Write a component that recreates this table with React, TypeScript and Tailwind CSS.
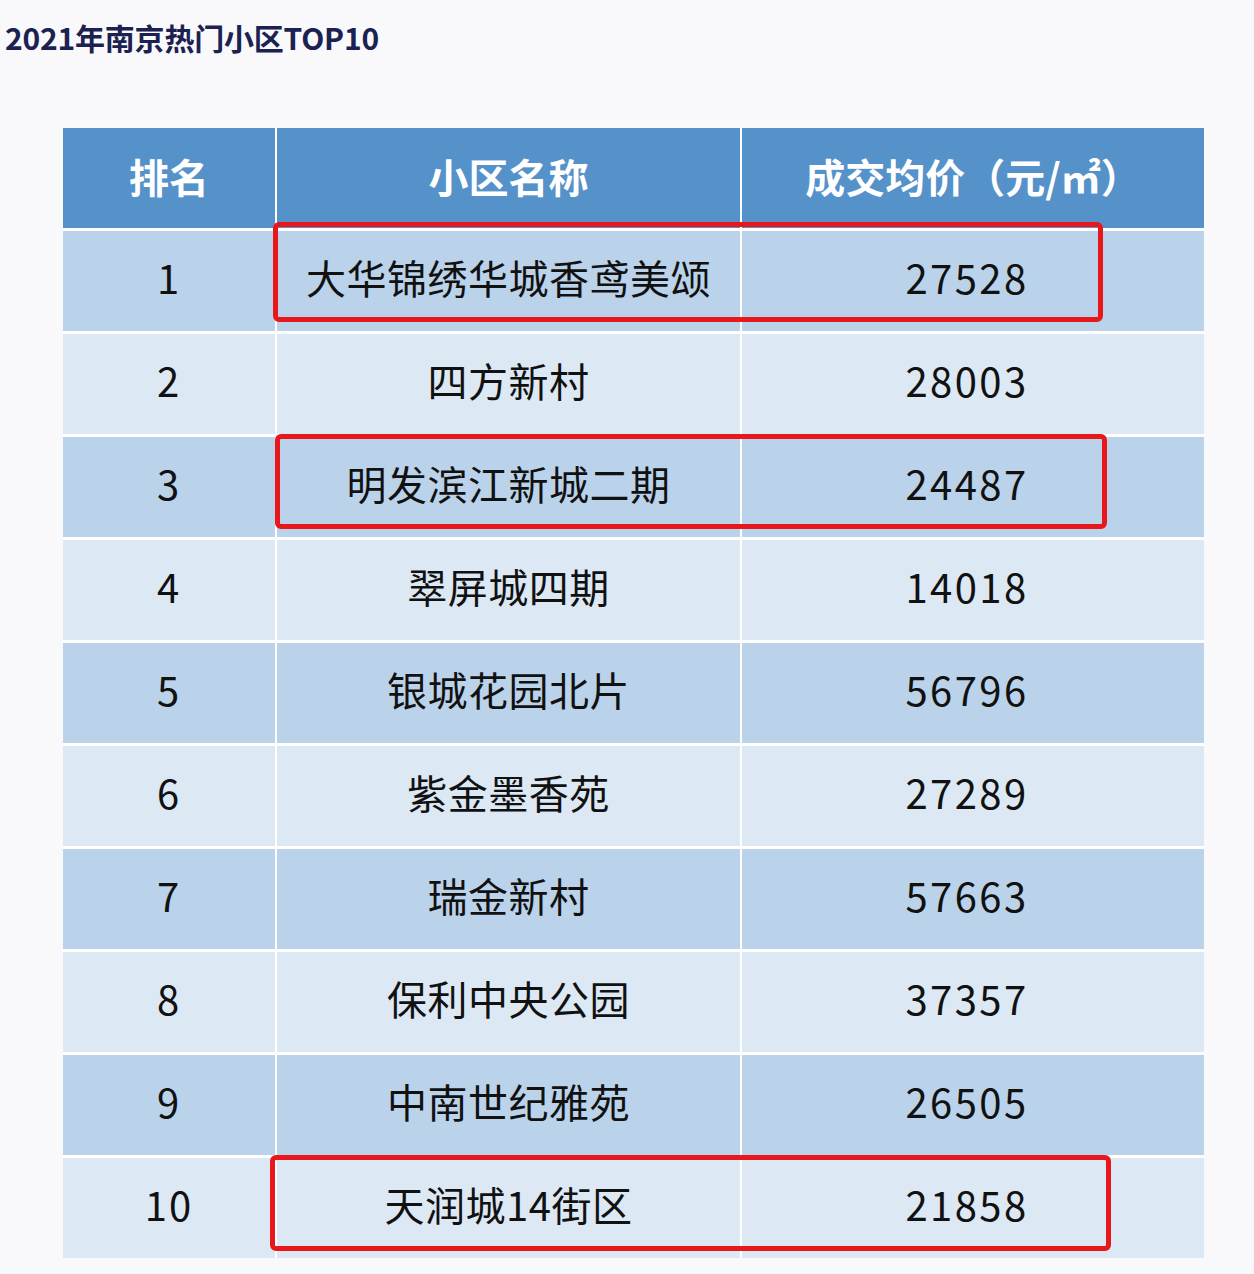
const rows: [string, string, string][] = [
  ["1", "大华锦绣华城香鸢美颂", "27528"],
  ["2", "四方新村", "28003"],
  ["3", "明发滨江新城二期", "24487"],
  ["4", "翠屏城四期", "14018"],
  ["5", "银城花园北片", "56796"],
  ["6", "紫金墨香苑", "27289"],
  ["7", "瑞金新村", "57663"],
  ["8", "保利中央公园", "37357"],
  ["9", "中南世纪雅苑", "26505"],
  ["10", "天润城14街区", "21858"],
];

const font = "font-['Noto_Sans_CJK_SC','Noto_Sans',sans-serif]";

export default function App() {
  return (
    <div className={`min-h-[1274px] w-[1254px] bg-[#f9f9fb] ${font}`}>
      <h1 className="pl-[5px] pt-[18px] text-[30px] font-bold leading-[38px] tracking-[-0.2px] text-[#1b2150]">
        2021年南京热门小区TOP10
      </h1>

      <div className="relative ml-[63px] mt-[72px] w-[1141px]">
        <div className="grid grid-cols-[212px_463px_462px] gap-x-[2px] gap-y-[3px] bg-white">
          {["排名", "小区名称", "成交均价（元/㎡）"].map((h) => (
            <div
              key={h}
              className="flex h-[100px] items-center justify-center bg-[#5692ca] pb-[4px] text-[40px] font-bold text-white"
            >
              {h}
            </div>
          ))}
          {rows.map(([rank, name, price], i) => {
            const bg = i % 2 === 0 ? "bg-[#bad3ea]" : "bg-[#dce8f4]";
            return [
              <div
                key={`${i}-r`}
                className={`flex h-[100px] items-center justify-center pb-[8px] text-[40px] tracking-[2px] text-[#111] ${bg}`}
              >
                {rank}
              </div>,
              <div
                key={`${i}-n`}
                className={`flex h-[100px] items-center justify-center pb-[8px] text-[40px] tracking-[0.5px] text-[#111] ${bg}`}
              >
                {name}
              </div>,
              <div
                key={`${i}-p`}
                className={`flex h-[100px] items-center justify-center pb-[8px] pr-[12px] text-[40px] tracking-[2.4px] text-[#111] ${bg}`}
              >
                {price}
              </div>,
            ];
          })}
        </div>

        {/* highlight boxes */}
        <div className="pointer-events-none absolute left-[210px] top-[94px] h-[100px] w-[830px] rounded-[6px] border-[5px] border-[#e8171c]" />
        <div className="pointer-events-none absolute left-[212px] top-[306px] h-[95px] w-[832px] rounded-[6px] border-[5px] border-[#e8171c]" />
        <div className="pointer-events-none absolute left-[207px] top-[1027px] h-[96px] w-[841px] rounded-[6px] border-[5px] border-[#e8171c]" />
      </div>
    </div>
  );
}
